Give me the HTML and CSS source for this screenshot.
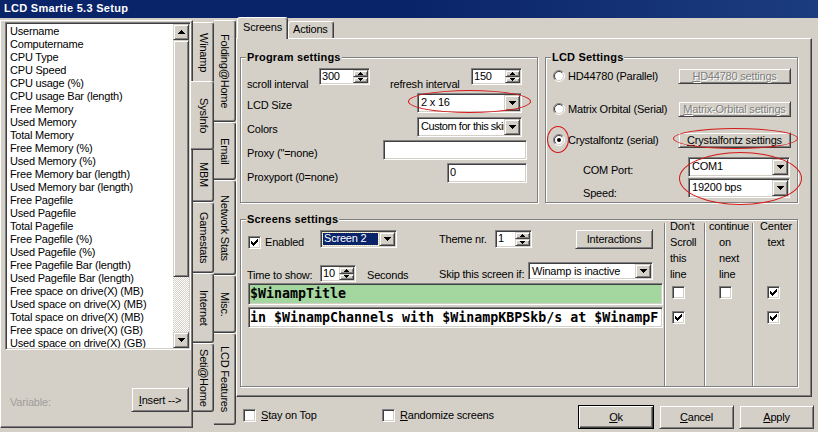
FILE: index.html
```html
<!DOCTYPE html>
<html>
<head>
<meta charset="utf-8">
<title>LCD Smartie 5.3 Setup</title>
<link rel="stylesheet" href="styles.css">
</head>
<body>
<div class="win">
  <div class="titlebar">LCD Smartie 5.3 Setup</div>
  <div class="client">
    <div class="leftpane">
      <div class="varpage">
        <div class="listbox sunken">
          <div class="items">
            <div>Username</div>
            <div>Computername</div>
            <div>CPU Type</div>
            <div>CPU Speed</div>
            <div>CPU usage (%)</div>
            <div>CPU usage Bar (length)</div>
            <div>Free Memory</div>
            <div>Used Memory</div>
            <div>Total Memory</div>
            <div>Free Memory (%)</div>
            <div>Used Memory (%)</div>
            <div>Free Memory bar (length)</div>
            <div>Used Memory bar (length)</div>
            <div>Free Pagefile</div>
            <div>Used Pagefile</div>
            <div>Total Pagefile</div>
            <div>Free Pagefile (%)</div>
            <div>Used Pagefile (%)</div>
            <div>Free Pagefile Bar (length)</div>
            <div>Used Pagefile Bar (length)</div>
            <div>Free space on drive(X) (MB)</div>
            <div>Used space on drive(X) (MB)</div>
            <div>Total space on drive(X) (MB)</div>
            <div>Free space on drive(X) (GB)</div>
            <div>Used space on drive(X) (GB)</div>
          </div>
          <div class="vscroll">
            <div class="sbtn raised"><svg width="7" height="4" viewBox="0 0 7 4"><path d="M3 0h1v1h1v1h1v1h1v1h-7v-1h1v-1h1v-1h1z"/></svg></div>
            <div class="thumb raised"></div>
            <div class="track"></div>
            <div class="sbtn raised"><svg width="7" height="4" viewBox="0 0 7 4"><path d="M0 0h7v1h-1v1h-1v1h-1v1h-1v-1h-1v-1h-1v-1h-1z"/></svg></div>
          </div>
        </div>
        <div class="varrow">
          <span class="varlabel">Variable:</span>
          <div class="btn raised insert"><span><u>I</u>nsert --&gt;</span></div>
        </div>
      </div>
      <div class="vtabs">
        <div class="vcol inner">
          <div class="vtab t-winamp">Winamp</div>
          <div class="vtab t-sysinfo active">SysInfo</div>
          <div class="vtab t-mbm">MBM</div>
          <div class="vtab t-game">Gamestats</div>
          <div class="vtab t-inet">Internet</div>
          <div class="vtab t-seti">Seti@Home</div>
        </div>
        <div class="vcol outer">
          <div class="vtab t-fold">Folding@Home</div>
          <div class="vtab t-email">Email</div>
          <div class="vtab t-net">Network Stats</div>
          <div class="vtab t-misc">Misc.</div>
          <div class="vtab t-lcdf">LCD Features</div>
        </div>
      </div>
    </div>

    <div class="rightpane">
      <div class="htabs">
        <div class="htab active">Screens</div>
        <div class="htab">Actions</div>
      </div>
      <div class="page">
        <div class="toprow">
          <div class="group prog">
            <span class="gtitle">Program settings</span>
            <div class="row r1">
              <span class="lbl w-scroll">scroll interval</span>
              <div class="spin sunken w51">
                <span class="val">300</span>
                <div class="arrows">
                  <div class="raised"><svg width="5" height="3" viewBox="0 0 5 3"><path d="M2 0h1v1h1v1h1v1h-5v-1h1v-1h1z"/></svg></div>
                  <div class="raised"><svg width="5" height="3" viewBox="0 0 5 3"><path d="M0 0h5v1h-1v1h-1v1h-1v-1h-1v-1h-1z"/></svg></div>
                </div>
              </div>
              <span class="lbl w-refresh">refresh interval</span>
              <div class="spin sunken w51">
                <span class="val">150</span>
                <div class="arrows">
                  <div class="raised"><svg width="5" height="3" viewBox="0 0 5 3"><path d="M2 0h1v1h1v1h1v1h-5v-1h1v-1h1z"/></svg></div>
                  <div class="raised"><svg width="5" height="3" viewBox="0 0 5 3"><path d="M0 0h5v1h-1v1h-1v1h-1v-1h-1v-1h-1z"/></svg></div>
                </div>
              </div>
            </div>
            <div class="row r2">
              <span class="lbl w-lcdsize">LCD Size</span>
              <div class="combo sunken w105">
                <span class="val">2 x 16</span>
                <div class="dd raised"><svg width="7" height="4" viewBox="0 0 7 4"><path d="M0 0h7v1h-1v1h-1v1h-1v1h-1v-1h-1v-1h-1v-1h-1z"/></svg></div>
              </div>
            </div>
            <div class="row r3">
              <span class="lbl w-lcdsize">Colors</span>
              <div class="combo sunken w105">
                <span class="val tight">Custom for this skin</span>
                <div class="dd raised"><svg width="7" height="4" viewBox="0 0 7 4"><path d="M0 0h7v1h-1v1h-1v1h-1v1h-1v-1h-1v-1h-1v-1h-1z"/></svg></div>
              </div>
            </div>
            <div class="row r4">
              <span class="lbl w-proxy">Proxy ("=none)</span>
              <div class="edit sunken w144"></div>
            </div>
            <div class="row r5">
              <span class="lbl w-port">Proxyport (0=none)</span>
              <div class="edit sunken w80"><span class="val">0</span></div>
            </div>
          </div>

          <div class="group lcd">
            <span class="gtitle">LCD Settings</span>
            <div class="rrow q1">
              <svg class="radio" width="12" height="12" viewBox="0 0 12 12"><circle cx="6" cy="6" r="4.5" fill="#fff"/><path d="M2.1 9.9A5.5 5.5 0 0 1 9.9 2.1" stroke="#808080" fill="none"/><path d="M9.9 2.1A5.5 5.5 0 0 1 2.1 9.9" stroke="#fff" fill="none"/><path d="M2.8 9.2A4.5 4.5 0 0 1 9.2 2.8" stroke="#404040" fill="none"/><path d="M9.2 2.8A4.5 4.5 0 0 1 2.8 9.2" stroke="#d4d0c8" fill="none"/></svg>
              <span class="rlbl">HD44780 (Parallel)</span>
              <div class="btn raised sbtn113 dis"><span><u>H</u>D44780 settings</span></div>
            </div>
            <div class="rrow q2">
              <svg class="radio" width="12" height="12" viewBox="0 0 12 12"><circle cx="6" cy="6" r="4.5" fill="#fff"/><path d="M2.1 9.9A5.5 5.5 0 0 1 9.9 2.1" stroke="#808080" fill="none"/><path d="M9.9 2.1A5.5 5.5 0 0 1 2.1 9.9" stroke="#fff" fill="none"/><path d="M2.8 9.2A4.5 4.5 0 0 1 9.2 2.8" stroke="#404040" fill="none"/><path d="M9.2 2.8A4.5 4.5 0 0 1 2.8 9.2" stroke="#d4d0c8" fill="none"/></svg>
              <span class="rlbl">Matrix Orbital (Serial)</span>
              <div class="btn raised sbtn113 dis"><span><u>M</u>atrix-Orbital settings</span></div>
            </div>
            <div class="rrow q3">
              <svg class="radio" width="12" height="12" viewBox="0 0 12 12"><circle cx="6" cy="6" r="4.5" fill="#fff"/><path d="M2.1 9.9A5.5 5.5 0 0 1 9.9 2.1" stroke="#808080" fill="none"/><path d="M9.9 2.1A5.5 5.5 0 0 1 2.1 9.9" stroke="#fff" fill="none"/><path d="M2.8 9.2A4.5 4.5 0 0 1 9.2 2.8" stroke="#404040" fill="none"/><path d="M9.2 2.8A4.5 4.5 0 0 1 2.8 9.2" stroke="#d4d0c8" fill="none"/><circle cx="6" cy="6" r="2" fill="#000"/></svg>
              <span class="rlbl">Crystalfontz (serial)</span>
              <div class="btn raised sbtn113"><span><u>C</u>rystalfontz settings</span></div>
            </div>
            <div class="row c1">
              <span class="lbl w-com">COM Port:</span>
              <div class="combo sunken w102">
                <span class="val">COM1</span>
                <div class="dd raised"><svg width="7" height="4" viewBox="0 0 7 4"><path d="M0 0h7v1h-1v1h-1v1h-1v1h-1v-1h-1v-1h-1v-1h-1z"/></svg></div>
              </div>
            </div>
            <div class="row c2">
              <span class="lbl w-com sp">Speed:</span>
              <div class="combo sunken w102">
                <span class="val">19200 bps</span>
                <div class="dd raised"><svg width="7" height="4" viewBox="0 0 7 4"><path d="M0 0h7v1h-1v1h-1v1h-1v1h-1v-1h-1v-1h-1v-1h-1z"/></svg></div>
              </div>
            </div>
          </div>
        </div>

        <div class="group screens">
          <span class="gtitle">Screens settings</span>
          <div class="sleft">
            <div class="row ra">
              <div class="enab">
                <div class="chk sunken"><svg width="7" height="7" viewBox="0 0 7 7"><path d="M6 0h1v1h-1zM5 1h2v1h-2zM0 2h1v1h-1zM4 2h3v1h-3zM0 3h2v1h-2zM3 3h3v1h-3zM0 4h5v1h-5zM1 5h3v1h-3zM2 6h1v1h-1z"/></svg></div>
                <span class="enlbl">Enabled</span>
              </div>
              <div class="combo sunken w77 focus">
                <span class="val"><span class="sel">Screen 2</span></span>
                <div class="dd raised"><svg width="7" height="4" viewBox="0 0 7 4"><path d="M0 0h7v1h-1v1h-1v1h-1v1h-1v-1h-1v-1h-1v-1h-1z"/></svg></div>
              </div>
              <span class="lbl w-theme">Theme nr.</span>
              <div class="spin sunken w37">
                <span class="val">1</span>
                <div class="arrows">
                  <div class="raised"><svg width="5" height="3" viewBox="0 0 5 3"><path d="M2 0h1v1h1v1h1v1h-5v-1h1v-1h1z"/></svg></div>
                  <div class="raised"><svg width="5" height="3" viewBox="0 0 5 3"><path d="M0 0h5v1h-1v1h-1v1h-1v-1h-1v-1h-1z"/></svg></div>
                </div>
              </div>
              <div class="btn raised interact"><span>Interactions</span></div>
            </div>
            <div class="row rb">
              <span class="lbl w-time">Time to show:</span>
              <div class="spin sunken w36">
                <span class="val">10</span>
                <div class="arrows">
                  <div class="raised"><svg width="5" height="3" viewBox="0 0 5 3"><path d="M2 0h1v1h1v1h1v1h-5v-1h1v-1h1z"/></svg></div>
                  <div class="raised"><svg width="5" height="3" viewBox="0 0 5 3"><path d="M0 0h5v1h-1v1h-1v1h-1v-1h-1v-1h-1z"/></svg></div>
                </div>
              </div>
              <span class="lbl w-sec">Seconds</span>
              <span class="lbl w-skip">Skip this screen if:</span>
              <div class="combo sunken w125">
                <span class="val">Winamp is inactive</span>
                <div class="dd raised"><svg width="7" height="4" viewBox="0 0 7 4"><path d="M0 0h7v1h-1v1h-1v1h-1v1h-1v-1h-1v-1h-1v-1h-1z"/></svg></div>
              </div>
            </div>
            <div class="line sunken green l1">$WinampTitle</div>
            <div class="line sunken l2">in $WinampChannels with $WinampKBPSkb/s at $WinampF</div>
          </div>
          <div class="scols">
            <div class="scol k1">
              <div class="hdr">Don't<br>Scroll<br>this<br>line</div>
              <div class="chk sunken cb1"></div>
              <div class="chk sunken cb2"><svg width="7" height="7" viewBox="0 0 7 7"><path d="M6 0h1v1h-1zM5 1h2v1h-2zM0 2h1v1h-1zM4 2h3v1h-3zM0 3h2v1h-2zM3 3h3v1h-3zM0 4h5v1h-5zM1 5h3v1h-3zM2 6h1v1h-1z"/></svg></div>
            </div>
            <div class="scol k2">
              <div class="hdr"><span class="first">continue</span><br>on<br>next<br>line</div>
              <div class="chk sunken cb1"></div>
            </div>
            <div class="scol k3">
              <div class="hdr">Center<br>text</div>
              <div class="chk sunken cb1"><svg width="7" height="7" viewBox="0 0 7 7"><path d="M6 0h1v1h-1zM5 1h2v1h-2zM0 2h1v1h-1zM4 2h3v1h-3zM0 3h2v1h-2zM3 3h3v1h-3zM0 4h5v1h-5zM1 5h3v1h-3zM2 6h1v1h-1z"/></svg></div>
              <div class="chk sunken cb2"><svg width="7" height="7" viewBox="0 0 7 7"><path d="M6 0h1v1h-1zM5 1h2v1h-2zM0 2h1v1h-1zM4 2h3v1h-3zM0 3h2v1h-2zM3 3h3v1h-3zM0 4h5v1h-5zM1 5h3v1h-3zM2 6h1v1h-1z"/></svg></div>
            </div>
          </div>
        </div>
      </div>

      <div class="bottom">
        <div class="chk sunken"></div>
        <span class="blbl w-stay"><u>S</u>tay on Top</span>
        <div class="chk sunken"></div>
        <span class="blbl"><u>R</u>andomize screens</span>
        <div class="btn okbtn"><span><u>O</u>k</span></div>
        <div class="btn raised b-cancel"><span><u>C</u>ancel</span></div>
        <div class="btn raised b-apply"><span><u>A</u>pply</span></div>
      </div>
    </div>
  </div>

  <div class="ellipse e1"></div>
  <div class="ellipse e2"></div>
  <div class="ellipse e3"></div>
  <div class="ellipse e4"></div>
</div>
</body>
</html>
```

FILE: styles.css
```css
* { box-sizing: border-box; }
html, body { margin: 0; padding: 0; }
body {
  width: 818px; height: 432px; overflow: hidden;
  background: #d4d0c8;
  font-family: "Liberation Sans", Arial, sans-serif;
  font-size: 11px; letter-spacing: -0.2px; color: #000;
}
svg { display: block; }
.win { position: relative; width: 818px; height: 432px; background: #d4d0c8; overflow: hidden; }

.titlebar {
  height: 18px; line-height: 17px; padding-left: 4px;
  background: linear-gradient(90deg, #0a246a 0%, #0a246a 50%, #1c3c80 100%);
  color: #fff; font-weight: bold; letter-spacing: 0.3px; white-space: nowrap;
}
.client { display: flex; height: 414px; }

/* classic 3D edges */
.raised {
  border: 1px solid; border-color: #d4d0c8 #404040 #404040 #d4d0c8;
  box-shadow: inset 1px 1px #fff, inset -1px -1px #808080;
  background: #d4d0c8;
}
.sunken {
  border: 1px solid; border-color: #808080 #fff #fff #808080;
  box-shadow: inset 1px 1px #404040, inset -1px -1px #d4d0c8;
  background: #fff; padding: 1px;
}
.btn { display: flex; align-items: center; justify-content: center; white-space: nowrap; }
.dis { color: #808080; text-shadow: 1px 1px 0 #fff; }

/* left pane */
.leftpane { display: flex; width: 236px; }
.varpage {
  width: 193px; height: 408px; margin-top: 2px;
  border: 1px solid; border-color: #fff #404040 #404040 #fff;
  box-shadow: inset -1px -1px #808080;
  padding: 1px 0 0 4px;
  display: flex; flex-direction: column;
}
.listbox { width: 186px; height: 328px; display: flex; flex: none; }
.items {
  flex: 1; background: #fff; padding: 1px 0 0 3px;
  line-height: 13px; white-space: nowrap; overflow: hidden;
}
.vscroll { width: 16px; display: flex; flex-direction: column; }
.sbtn { height: 16px; flex: none; display: flex; align-items: center; justify-content: center; }
.thumb { height: 237px; flex: none; }
.track {
  flex: 1;
  background: repeating-conic-gradient(#d4d0c8 0 25%, #fff 0 50%) 0 0 / 2px 2px;
}
.varrow { display: flex; align-items: flex-start; margin-top: 37px; }
.varlabel { color: #a09e98; margin: 9px 0 0 5px; }
.insert { width: 58px; height: 25px; margin-left: auto; margin-right: 3px; }

.vtabs { display: flex; width: 43px; }
.vcol { display: flex; flex-direction: column; }
.vcol.inner { width: 21px; padding-top: 4px; }
.vcol.outer { width: 22px; padding-top: 2px; }
.vtab {
  flex: none;
  writing-mode: vertical-rl; text-align: center;
  border-top: 1px solid #fff; border-right: 1px solid #404040; border-bottom: 1px solid #404040;
  box-shadow: inset -1px 0 #808080, inset 0 -1px #808080;
  border-radius: 0 3px 3px 0;
  line-height: 19px; white-space: nowrap; background: #d4d0c8;
}
.vcol.outer .vtab { line-height: 21px; }
.vtab.active { margin: -2px 0 -2px -2px; width: 23px; position: relative; z-index: 1; }
.t-winamp { height: 61px; }
.t-sysinfo { height: 69px; }
.t-mbm { height: 54px; }
.t-game { height: 71px; }
.t-inet { height: 70px; }
.t-seti { height: 69px; }
.t-fold { height: 102px; }
.t-email { height: 58px; }
.t-net { height: 95px; }
.t-misc { height: 58px; }
.t-lcdf { height: 92px; }

/* right pane */
.rightpane { width: 582px; display: flex; flex-direction: column; }
.htabs { height: 20px; display: flex; align-items: flex-end; padding-left: 1px; flex: none; }
.htab {
  height: 17px; padding: 0 0 0 4px;
  border: 1px solid; border-bottom: none; border-color: #fff #404040 transparent #fff;
  box-shadow: inset -1px 0 #808080;
  border-radius: 3px 3px 0 0; line-height: 15px; white-space: nowrap;
  width: 46px;
}
.htab.active {
  width: 51px; height: 22px; margin-bottom: -1px; padding-top: 2px; padding-left: 5px;
  position: relative; z-index: 1; background: #d4d0c8;
}
.page {
  width: 576px; height: 359px; flex: none;
  border: 1px solid; border-color: #fff #404040 #404040 #fff;
  box-shadow: inset -1px -1px #808080;
  padding: 18px 0 0 3px;
}
.toprow { display: flex; }
.group {
  position: relative;
  border: 1px solid #808080;
  box-shadow: inset 1px 1px #fff, 1px 1px #fff;
}
.gtitle {
  position: absolute; top: -7px; left: 5px; padding: 0 1px;
  background: #d4d0c8; font-weight: bold; line-height: 13px; letter-spacing: 0.2px;
  white-space: nowrap;
}
.row { display: flex; align-items: flex-start; flex: none; }
.lbl { white-space: nowrap; line-height: 13px; flex: none; }
.val { flex: 1; line-height: 13px; white-space: nowrap; overflow: hidden; padding-left: 1px; }
.tight { letter-spacing: -0.45px; }

.spin, .combo, .edit { display: flex; flex: none; }
.arrows { width: 15px; display: flex; flex-direction: column; flex: none; }
.arrows > div { flex: 1; display: flex; align-items: center; justify-content: center; }
.dd { width: 16px; flex: none; display: flex; align-items: center; justify-content: center; }
.combo .val { padding-left: 2px; padding-top: 1px; }
.w51 { width: 51px; }
.w37 { width: 37px; }
.w36 { width: 36px; }
.w77 { width: 77px; }
.w80 { width: 80px; }
.w102 { width: 102px; }
.w105 { width: 105px; }
.w125 { width: 125px; }
.w144 { width: 144px; }

/* program settings */
.prog { width: 298px; height: 146px; padding: 10px 0 0 6px; }
.prog .r1 { height: 21px; }
.prog .r1 .lbl { padding-top: 10px; }
.w-scroll { width: 72px; }
.w-refresh { width: 81px; margin-left: 20px; }
.prog .r2 { margin-top: 4px; height: 20px; }
.prog .r3 { margin-top: 4px; height: 20px; }
.prog .r4 { margin-top: 3px; height: 20px; }
.prog .r5 { margin-top: 3px; height: 20px; }
.prog .r2 .lbl, .prog .r3 .lbl { padding-top: 6px; }
.prog .r4 .lbl { padding-top: 7px; }
.prog .r5 .lbl { padding-top: 8px; }
.prog .combo, .prog .edit { height: 20px; }
.w-lcdsize { width: 170px; }
.w-proxy { width: 136px; }
.w-port { width: 200px; }
.edit .val { padding-top: 1px; }

/* lcd settings */
.lcd { width: 253px; height: 146px; margin-left: 7px; padding: 9px 6px 0 6px; }
.rrow { display: flex; align-items: center; height: 17px; }
.radio { margin-left: 1px; flex: none; }
.rlbl { margin-left: 3px; white-space: nowrap; }
.sbtn113 { width: 113px; height: 16px; margin-left: auto; }
.q2 { margin-top: 16px; }
.q3 { margin-top: 14px; }
.lcd .c1 { margin-top: 9px; height: 20px; }
.lcd .c2 { margin-top: 1px; height: 20px; }
.w-com { width: 105px; margin-left: 31px; padding-top: 7px; }
.w-com.sp { padding-top: 9px; }
.lcd .combo { margin-left: auto; margin-right: 1px; height: 20px; }

/* screens settings */
.screens { width: 558px; height: 168px; margin-top: 16px; display: flex; }
.sleft { width: 423px; padding: 9px 0 0 6px; display: flex; flex-direction: column; }
.ra { height: 20px; }
.enab { width: 73px; display: flex; align-items: flex-start; flex: none; }
.enab .chk { margin: 7px 0 0 1px; }
.enlbl { margin: 7px 0 0 4px; line-height: 13px; }
.focus { margin-top: 1px; height: 18px; }
.focus .val { padding: 1px 1px 1px 1px; }
.sel {
  display: block; height: 12px; line-height: 11px; padding-left: 1px;
  background: #0a246a; color: #fff; outline: 1px dotted #e8e0a0; outline-offset: 0;
}
.w-theme { width: 56px; margin-left: 42px; padding-top: 4px; }
.ra .spin { margin-top: 1px; height: 18px; }
.interact { width: 78px; height: 20px; margin-left: 43px; }
.rb { height: 18px; margin-top: 13px; }
.w-time { width: 73px; padding-top: 7px; }
.rb .spin { margin-top: 3px; height: 17px; }
.w-sec { width: 72px; margin-left: 11px; padding-top: 7px; }
.w-skip { width: 89px; padding-top: 6px; }
.rb .combo { height: 18px; }
.line {
  width: 415px; margin-left: 1px; flex: none;
  font-family: "DejaVu Sans Mono", monospace; font-weight: bold; font-size: 13.3px;
  letter-spacing: 0; white-space: nowrap; overflow: hidden; padding: 1px;
}
.l1 { margin-top: 3px; height: 22px; line-height: 18px; }
.l2 { margin-top: 2px; height: 21px; line-height: 17px; }
.green { background: #a4d6a0; }

.scols { display: flex; margin-top: 3px; }
.scol {
  border-left: 1px solid #808080; box-shadow: inset 1px 0 #fff;
  display: flex; flex-direction: column; align-items: flex-start;
}
.k1 { width: 40px; }
.k2 { width: 48px; }
.k3 { width: 45px; }
.hdr { line-height: 16px; margin-top: -5px; height: 64px; white-space: nowrap; }
.k1 .hdr { padding-left: 5px; }
.k2 .hdr { padding-left: 14px; }
.k2 .first { margin-left: -10px; }
.k3 .hdr { align-self: stretch; text-align: center; padding-left: 2px; }
.chk {
  width: 13px; height: 13px; flex: none;
  display: flex; align-items: center; justify-content: center;
}
.scol .cb1 { margin-top: 4px; }
.scol .cb2 { margin-top: 12px; }
.k1 .chk { margin-left: 7px; }
.k2 .chk, .k3 .chk { margin-left: 14px; }

/* bottom row */
.bottom { display: flex; align-items: flex-start; height: 35px; padding-left: 7px; flex: none; }
.bottom .chk { margin-top: 12px; }
.blbl { margin: 12px 0 0 5px; line-height: 13px; white-space: nowrap; }
.w-stay { width: 121px; }
.okbtn {
  margin-left: auto; width: 76px; height: 24px; margin-top: 8px;
  border: 1px solid #000;
  box-shadow: inset 1px 1px #fff, inset -1px -1px #404040, inset -2px -2px #808080;
}
.b-cancel { width: 75px; height: 24px; margin: 8px 0 0 5px; }
.b-apply { width: 75px; height: 24px; margin: 8px 4px 0 5px; }

/* annotation ellipses */
.ellipse { position: absolute; border: 1px solid #d41818; border-radius: 50%; pointer-events: none; }
.e1 { left: 408px; top: 90px; width: 123px; height: 23px; }
.e2 { left: 547px; top: 126px; width: 22px; height: 27px; }
.e3 { left: 673px; top: 128px; width: 125px; height: 21px; }
.e4 { left: 679px; top: 152px; width: 123px; height: 53px; }
```
